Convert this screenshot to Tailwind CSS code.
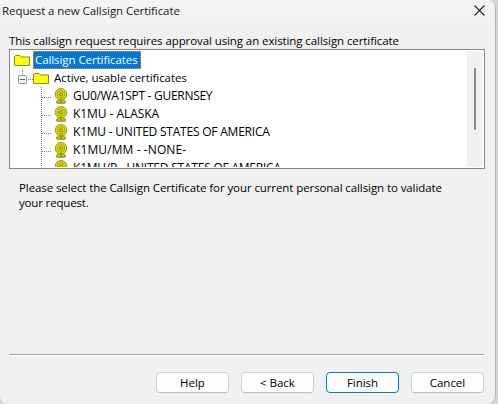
<!DOCTYPE html>
<html lang="en">
<head>
<meta charset="utf-8">
<title>Request a new Callsign Certificate</title>
<script src="https://cdn.jsdelivr.net/npm/@tailwindcss/browser@4"></script>
</head>
<body class="w-[498px] h-[404px] overflow-hidden bg-[#d6d6d6] font-['Open_Sans','Noto_Sans',sans-serif] text-[11.5px] leading-[18px] text-black whitespace-nowrap">
<svg class="hidden">
  <symbol id="folder" viewBox="0 0 17 12"><path d="M.5 11.500V2.500L2 1.500h4l1.500 1.500H15.500V11.500z" fill="#ff0" stroke="#8a8a20"/></symbol>
  <symbol id="seal" viewBox="0 0 14 16"><path d="M4.500 10L4 12.500 2 14l1 1.300h8l1-1.300-2-1.500L9.500 10z" fill="#c4c400" stroke="#808040" stroke-width=".9"/><circle cx="7" cy="6.300" r="5.800" fill="#dede00" stroke="#8c8c3a" stroke-width=".9"/><circle cx="7" cy="6.300" r="3.700" fill="#e2e200" stroke="#99991a" stroke-width=".8"/><circle cx="7" cy="6.300" r="1.600" fill="#d2d200" stroke="#77771a" stroke-width=".9"/><path d="M7 10v5" stroke="#77771a" stroke-width=".8"/></symbol>
</svg>
<div class="w-[496px] h-[404px] flex flex-col bg-[#f0f0f0] border-r border-[#b2b2b2] rounded-r-lg rounded-bl-lg overflow-hidden">
  <header class="h-[23px] shrink-0 bg-[#f3f3f3] flex items-start justify-between pl-[2px] pr-[10px] text-[#1a1a1a]">
    <span class="mt-[2px] tracking-[-0.07px]">Request a new Callsign Certificate</span>
    <svg class="w-[11px] h-[11px] mt-[5px]" viewBox="0 0 11 11"><path d="M.5.5l10 10M10.500.5l-10 10" stroke="#222" stroke-width="1.100"/></svg>
  </header>
  <main class="flex flex-col px-[9px] pt-[9px] grow">
    <p class="h-[17px] tracking-[-0.09px]">This callsign request requires approval using an existing callsign certificate</p>
    <div class="w-[476px] h-[120px] border border-[#828790] bg-white p-px flex overflow-hidden">
      <div class="grow h-[116px] overflow-hidden">
        <div class="h-[18px] flex items-center pl-[3px]">
          <svg class="w-[17px] h-[12px] mr-[2px] shrink-0"><use href="#folder"/></svg>
          <span class="w-[108px] h-[18px] bg-[#0078d7] text-white border border-dotted border-[#ff8728] leading-[16px] pl-[1px] tracking-[-0.08px]">Callsign Certificates</span>
        </div>
        <div class="h-[18px] flex items-center">
          <svg class="w-[22px] h-[18px] shrink-0" viewBox="0 0 22 18"><path d="M11.500 0v6M17 10.500h5" stroke="#777" stroke-dasharray="1 1"/><rect x="7.500" y="6.500" width="8" height="8" rx="1" fill="#f5f5f5" stroke="#919191"/><path d="M9 10.500h5" stroke="#4060a8"/></svg>
          <svg class="w-[17px] h-[12px] mr-[4px] shrink-0"><use href="#folder"/></svg>
          <span class="tracking-[-0.07px]">Active, usable certificates</span>
        </div>
        <div class="h-[18px] flex items-center text-[12px]">
          <svg class="w-[43px] h-[18px] shrink-0" viewBox="0 0 43 18"><path d="M30.500 0v18M31 10.500h10" stroke="#808080" stroke-dasharray="1 1"/></svg>
          <svg class="w-[14px] h-[16px] mr-[5px] shrink-0"><use href="#seal"/></svg>
          <span class="tracking-[-0.29px]">GU0/WA1SPT - GUERNSEY</span>
        </div>
        <div class="h-[18px] flex items-center text-[12px]">
          <svg class="w-[43px] h-[18px] shrink-0" viewBox="0 0 43 18"><path d="M30.500 0v18M31 10.500h10" stroke="#808080" stroke-dasharray="1 1"/></svg>
          <svg class="w-[14px] h-[16px] mr-[5px] shrink-0"><use href="#seal"/></svg>
          <span class="tracking-[-0.06px]">K1MU - ALASKA</span>
        </div>
        <div class="h-[18px] flex items-center text-[12px]">
          <svg class="w-[43px] h-[18px] shrink-0" viewBox="0 0 43 18"><path d="M30.500 0v18M31 10.500h10" stroke="#808080" stroke-dasharray="1 1"/></svg>
          <svg class="w-[14px] h-[16px] mr-[5px] shrink-0"><use href="#seal"/></svg>
          <span class="tracking-[-0.22px]">K1MU - UNITED STATES OF AMERICA</span>
        </div>
        <div class="h-[18px] flex items-center text-[12px]">
          <svg class="w-[43px] h-[18px] shrink-0" viewBox="0 0 43 18"><path d="M30.500 0v18M31 10.500h10" stroke="#808080" stroke-dasharray="1 1"/></svg>
          <svg class="w-[14px] h-[16px] mr-[5px] shrink-0"><use href="#seal"/></svg>
          <span class="tracking-[0.1px]">K1MU/MM - -NONE-</span>
        </div>
        <div class="h-[18px] flex items-center text-[12px]">
          <svg class="w-[43px] h-[18px] shrink-0" viewBox="0 0 43 18"><path d="M30.500 0v18M31 10.500h10" stroke="#808080" stroke-dasharray="1 1"/></svg>
          <svg class="w-[14px] h-[16px] mr-[5px] shrink-0"><use href="#seal"/></svg>
          <span class="tracking-[-0.22px]">K1MU/P - UNITED STATES OF AMERICA</span>
        </div>
      </div>
      <div class="w-[16px] h-[116px] bg-[#f0f0f0] pl-[7px] pt-[17px] shrink-0"><div class="w-[2px] h-[62px] bg-[#858585] rounded-sm"></div></div>
    </div>
    <div class="mt-[11px] ml-[10px] leading-[15px] flex flex-col"><span class="tracking-[-0.09px]">Please select the Callsign Certificate for your current personal callsign to validate</span><span class="tracking-[-0.16px]">your request.</span></div>
  </main>
  <footer class="h-[50px] shrink-0 mx-[9px] w-[475px] border-t border-[#a0a0a0]">
    <div class="border-t border-white pt-[16px] flex justify-end gap-[12px] tracking-[-0.03px]">
      <button class="w-[73px] h-[21px] bg-[#fdfdfd] border border-[#d0d0d0] border-b-[#bcbcbc] rounded leading-[19px]">Help</button>
      <button class="w-[73px] h-[21px] bg-[#fdfdfd] border border-[#d0d0d0] border-b-[#bcbcbc] rounded leading-[19px]">&lt; Back</button>
      <button class="w-[73px] h-[21px] bg-[#fdfdfd] border border-[#0078d4] rounded leading-[19px]">Finish</button>
      <button class="w-[73px] h-[21px] bg-[#fdfdfd] border border-[#d0d0d0] border-b-[#bcbcbc] rounded leading-[19px]">Cancel</button>
    </div>
  </footer>
</div>
</body>
</html>
